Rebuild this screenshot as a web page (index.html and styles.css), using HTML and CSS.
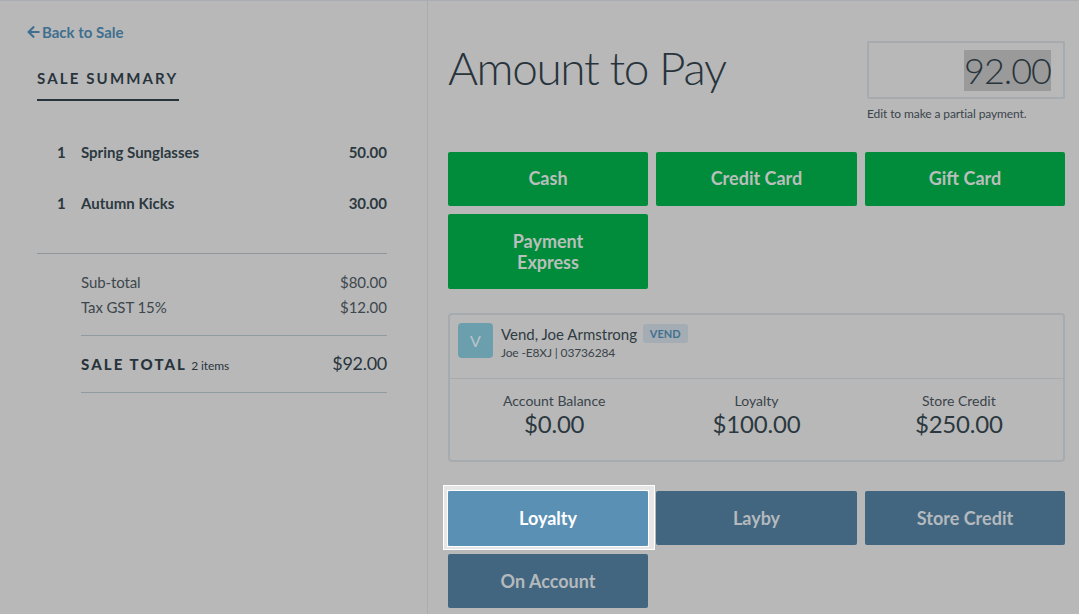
FILE: index.html
```html
<!DOCTYPE html>
<html lang="en">
  <head>
    <meta charset="UTF-8" />
    <title>Amount to Pay</title>
    <link rel="stylesheet" href="styles.css">
  </head>
  <body>
    <div class="page">
      <div class="summary">
        <a class="back-link">
          <svg class="back-icon" viewBox="0 0 448 512" width="13" height="14"><path d="M257.5 445.1l-22.2 22.2c-9.4 9.4-24.6 9.4-33.9 0L7 273c-9.4-9.4-9.4-24.6 0-33.9L201.4 44.7c9.4-9.4 24.6-9.4 33.9 0l22.2 22.2c9.5 9.5 9.3 25-.4 34.3L136.6 216H424c13.3 0 24 10.7 24 24v32c0 13.3-10.7 24-24 24H136.6l120.5 114.8c9.8 9.3 10 24.8.4 34.3z" /></svg>Back to Sale
        </a>
        <div class="summary-inner">
          <h2 class="summary-title">SALE SUMMARY</h2>
          <div class="line-item">
            <span class="qty">1</span><span class="item-name">Spring Sunglasses</span><span class="item-price">50.00</span>
          </div>
          <div class="line-item">
            <span class="qty">1</span><span class="item-name">Autumn Kicks</span><span class="item-price">30.00</span>
          </div>
          <div class="totals">
            <div class="total-row"><span>Sub-total</span><span>$80.00</span></div>
            <div class="total-row"><span>Tax GST 15%</span><span>$12.00</span></div>
            <div class="grand-total">
              <span><b class="grand-label">SALE TOTAL</b> <small class="item-count">2 items</small></span>
              <span class="grand-value">$92.00</span>
            </div>
          </div>
        </div>
      </div>

      <div class="pay">
        <div class="pay-header">
          <h1 class="pay-title">Amount to Pay</h1>
          <div class="amount-box">
            <div class="amount-input"><span class="amount-selected">92.00</span></div>
            <p class="amount-hint">Edit to make a partial payment.</p>
          </div>
        </div>

        <div class="btn-grid">
          <button class="pay-btn green">Cash</button>
          <button class="pay-btn green">Credit Card</button>
          <button class="pay-btn green">Gift Card</button>
          <button class="pay-btn green tall">Payment<br>Express</button>
        </div>

        <div class="customer">
          <div class="customer-head">
            <div class="avatar">V</div>
            <div>
              <div class="customer-name">Vend, Joe Armstrong <span class="tag">VEND</span></div>
              <div class="customer-code">Joe -E8XJ | 03736284</div>
            </div>
          </div>
          <div class="balances">
            <div class="balance"><span class="balance-label">Account Balance</span><span class="balance-value">$0.00</span></div>
            <div class="balance"><span class="balance-label">Loyalty</span><span class="balance-value">$100.00</span></div>
            <div class="balance"><span class="balance-label">Store Credit</span><span class="balance-value">$250.00</span></div>
          </div>
        </div>

        <div class="btn-grid">
          <button class="pay-btn active">Loyalty</button>
          <button class="pay-btn blue">Layby</button>
          <button class="pay-btn blue">Store Credit</button>
          <button class="pay-btn blue">On Account</button>
        </div>
      </div>
    </div>
  </body>
</html>
```

FILE: styles.css
```css
html,
body {
  height: 100%;
}
body {
  margin: 0;
  font-family: Lato, "Liberation Sans", sans-serif;
  background-color: #b8b8b8;
  color: #28343c;
  overflow: hidden;
}
.page {
  display: flex;
  height: 614px;
  border-top: 1px solid #a9adb1;
  box-sizing: border-box;
}

/* left column */
.summary {
  width: 428px;
  flex-shrink: 0;
  box-sizing: border-box;
  border-right: 1px solid #a9adb1;
  padding: 21px 40px 0 27px;
}
.back-link {
  display: flex;
  align-items: center;
  gap: 2px;
  height: 19px;
  font-size: 15px;
  font-weight: 700;
  color: #3f6f8f;
}
.back-icon {
  fill: #3f6f8f;
}
.summary-inner {
  padding-left: 10px;
}
.summary-title {
  display: inline-block;
  margin: 28px 0 0;
  padding-bottom: 11px;
  width: 142px;
  border-bottom: 2px solid #28343c;
  font-size: 15px;
  line-height: 19px;
  font-weight: 700;
  letter-spacing: 2.15px;
  white-space: nowrap;
}
.line-item {
  display: flex;
  height: 50px;
  align-items: center;
  font-size: 15px;
  font-weight: 700;
  color: #2c3840;
}
.line-item:first-of-type {
  margin-top: 26px;
  margin-bottom: 1px;
}
.qty {
  width: 44px;
  padding-left: 20px;
  box-sizing: border-box;
}
.item-name {
  flex: 1;
}
.totals {
  margin-top: 25px;
  border-top: 1px solid #8f979c;
  padding: 16px 0 0 44px;
}
.total-row {
  display: flex;
  justify-content: space-between;
  font-size: 15px;
  line-height: 25px;
  color: #3d474e;
}
.total-row span:first-child {
  letter-spacing: -0.1px;
}
.grand-total {
  display: flex;
  justify-content: space-between;
  align-items: center;
  height: 54px;
  padding-bottom: 2px;
  margin-top: 15px;
  border-top: 1px solid #8f9ba0;
  border-bottom: 1px solid #8f9ba0;
}
.grand-label {
  font-size: 15px;
  font-weight: 900;
  letter-spacing: 2.1px;
}
.item-count {
  font-size: 12px;
  letter-spacing: -0.1px;
}
.grand-value {
  font-size: 18px;
  letter-spacing: -0.3px;
}

/* right column */
.pay {
  flex: 1;
  padding: 0 14px 0 20px;
}
.pay-header {
  display: flex;
  justify-content: space-between;
  height: 151px;
}
.pay-title {
  margin: 37px 0 0;
  font-size: 46px;
  line-height: 60px;
  font-weight: 300;
  letter-spacing: -1.4px;
  color: #28343c;
}
.amount-box {
  width: 198px;
  padding-top: 40px;
}
.amount-input {
  height: 58px;
  box-sizing: border-box;
  border: 2px solid #a6abaf;
  border-radius: 2px;
  padding: 7px 12px 0 0;
  text-align: right;
}
.amount-selected {
  display: inline-block;
  height: 41px;
  line-height: 41px;
  background-color: #9a9a9a;
  font-size: 36px;
  font-weight: 300;
  letter-spacing: -1px;
}
.amount-hint {
  margin: 7px 0 0;
  font-size: 12px;
  line-height: 16px;
  letter-spacing: -0.1px;
  color: #3a444b;
}
.btn-grid {
  display: grid;
  grid-template-columns: 200px 201px 200px;
  gap: 8px;
}
.pay-btn {
  position: relative;
  height: 54px;
  border: 0;
  border-radius: 2px;
  padding: 0;
  font-family: inherit;
  font-size: 18px;
  line-height: 21px;
  font-weight: 700;
  color: #b9bfbb;
}
.pay-btn.green {
  background-color: #008c3a;
  padding-bottom: 1px;
}
.pay-btn.tall {
  height: 75px;
  padding-bottom: 0;
}
.pay-btn.blue {
  background-color: #42667f;
  color: #b4b9bd;
}
.pay-btn.active {
  height: 55px;
  background-color: #5b90b5;
  color: #fff;
}
.pay-btn.active::after {
  content: "";
  position: absolute;
  top: -6px;
  right: -7px;
  bottom: -4px;
  left: -5px;
  border: solid #e6e6e6;
  border-width: 5px 6px 3px 4px;
  outline: 1px solid #fff;
  outline-offset: -1px;
  box-shadow: inset 0 0 0 1px #fff;
}
.customer {
  margin: 24px 0 29px;
  width: 617px;
  height: 149px;
  box-sizing: border-box;
  border: 2px solid #a6abaf;
  border-radius: 4px;
}
.customer-head {
  display: flex;
  gap: 8px;
  height: 64px;
  padding: 8px 0 0 8px;
  box-sizing: border-box;
  border-bottom: 1px solid #a6abaf;
}
.avatar {
  width: 35px;
  height: 35px;
  border-radius: 4px;
  background-color: #6b9fae;
  color: #b9c4c8;
  font-size: 16px;
  line-height: 35px;
  text-align: center;
}
.customer-name {
  font-size: 15px;
  line-height: 22px;
  color: #2f3b43;
}
.tag {
  display: inline-block;
  margin-left: 2px;
  padding: 0 7px;
  height: 19px;
  line-height: 19px;
  border-radius: 3px;
  background-color: #a4adb4;
  color: #44708f;
  font-size: 11px;
  font-weight: 700;
  vertical-align: 2px;
}
.customer-code {
  font-size: 12px;
  line-height: 16px;
  letter-spacing: -0.15px;
  color: #3a444b;
}
.balances {
  display: grid;
  grid-template-columns: 1fr 1fr 1fr;
  padding: 13px 3px 0;
}
.balance {
  display: flex;
  flex-direction: column;
  align-items: center;
}
.balance-label {
  font-size: 14px;
  line-height: 18px;
  color: #3a444b;
}
.balance-value {
  font-size: 24px;
  line-height: 27px;
  letter-spacing: -0.2px;
  color: #2c3840;
}
```
